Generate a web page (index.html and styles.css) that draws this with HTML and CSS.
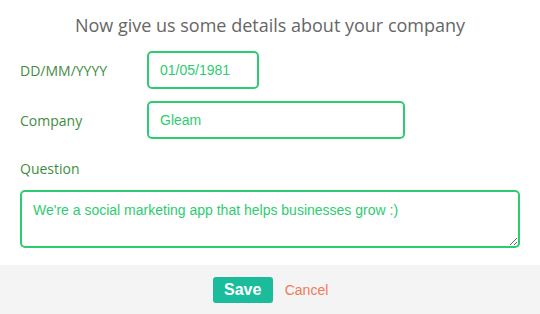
FILE: index.html
```html
<!DOCTYPE html>
<html>
<head>
<meta charset="utf-8">
<link rel="stylesheet" href="styles.css">
</head>
<body>
<div class="form">
  <h1 class="title">Now give us some details about your company</h1>
  <div class="row">
    <label class="label">DD/MM/YYYY</label>
    <input class="field field-date" type="text" value="01/05/1981">
  </div>
  <div class="row">
    <label class="label">Company</label>
    <input class="field field-company" type="text" value="Gleam">
  </div>
  <div class="question">
    <label class="label">Question</label>
    <textarea class="area">We're a social marketing app that helps businesses grow :)</textarea>
  </div>
</div>
<div class="footer">
  <button class="save">Save</button>
  <a class="cancel">Cancel</a>
</div>
</body>
</html>
```
FILE: styles.css
```css
html, body { margin: 0; padding: 0; background: #fff; }
body { width: 540px; height: 314px; overflow: hidden; }
.form { padding: 0 20px; }
.title {
  margin: 0;
  padding-top: 11px;
  height: 40px;
  box-sizing: border-box;
  text-align: center;
  font-family: "Open Sans", sans-serif;
  font-weight: 400;
  font-size: 18px;
  line-height: 28px;
  color: #666;
}
.row {
  display: flex;
  align-items: center;
  margin-top: 11px;
}
.row + .row { margin-top: 12px; }
.label {
  width: 127px;
  flex: none;
  font-family: "Open Sans", sans-serif;
  font-size: 14px;
  color: #3f8d3f;
}
.field {
  box-sizing: border-box;
  height: 38px;
  border: 2px solid #2ecc71;
  border-radius: 5px;
  padding: 0 11px;
  font-family: "Liberation Sans", Arial, sans-serif;
  font-size: 14px;
  color: #2ecc71;
  outline: none;
  margin: 0;
}
.field-date { width: 112px; }
.field-company { width: 258px; }
.question { margin-top: 20px; }
.question .label { display: block; line-height: 20px; }
.area {
  display: block;
  box-sizing: border-box;
  width: 500px;
  height: 58px;
  margin-top: 11px;
  border: 2px solid #2ecc71;
  border-radius: 5px;
  padding: 10px 11px;
  font-family: "Liberation Sans", Arial, sans-serif;
  font-size: 14px;
  line-height: 17px;
  color: #2ecc71;
  outline: none;
  resize: both;
}
.footer {
  position: absolute;
  left: 0; right: 0; bottom: 0;
  height: 49px;
  background: #f4f4f4;
  display: flex;
  justify-content: center;
  align-items: center;
  gap: 12px;
}
.save {
  width: 60px;
  height: 26px;
  border: none;
  border-radius: 3px;
  background: #1abc9c;
  color: #fff;
  font-family: "Liberation Sans", Arial, sans-serif;
  font-weight: 700;
  font-size: 16px;
  padding: 0;
  margin-left: 1px;
}
.cancel {
  font-family: "Liberation Sans", Arial, sans-serif;
  font-size: 14px;
  color: #ee7b58;
  cursor: pointer;
}
```
